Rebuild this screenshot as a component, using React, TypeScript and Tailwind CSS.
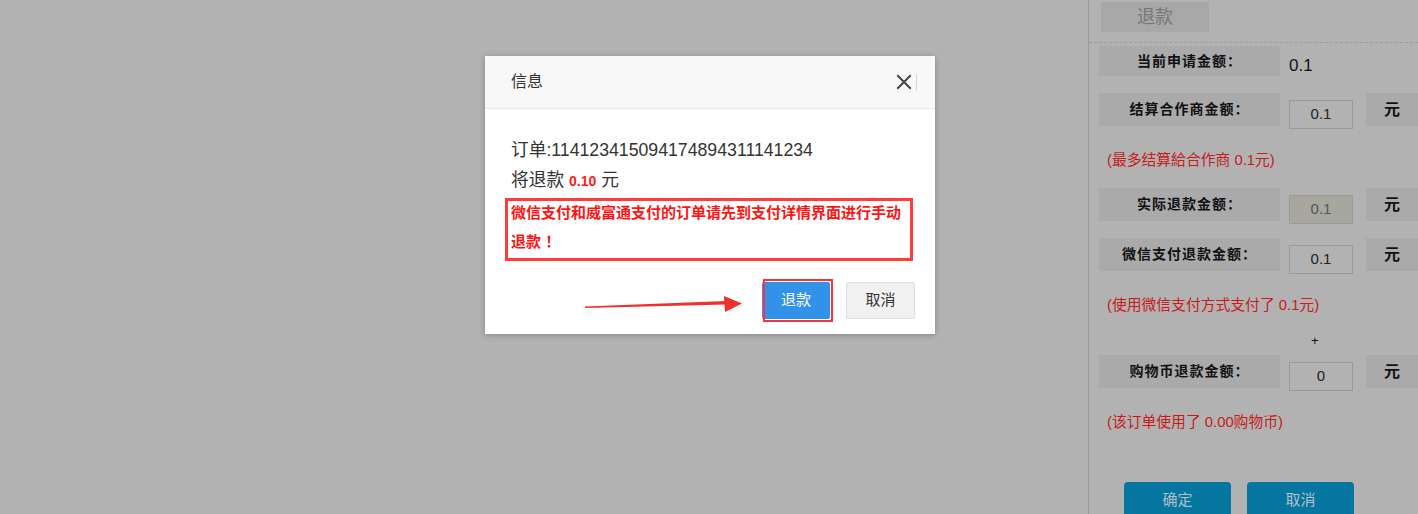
import React from "react";

const CJK = '"Liberation Sans", "Noto Sans CJK SC", sans-serif';

function Row({ label, children, top, h = "h-[33px]" }: { label: string; children?: React.ReactNode; top: string; h?: string }) {
  return (
    <div className={`flex items-start ${h} ${top}`}>
      <div className={`w-[181px] ${h} bg-[#aaaaaa] flex items-center justify-center text-[14px] font-bold text-[#111] tracking-[1px]`}>
        {label}
      </div>
      {children}
    </div>
  );
}

function Input({ value, disabled }: { value: string; disabled?: boolean }) {
  return (
    <div
      className={`ml-[9px] mt-[7px] w-[64px] h-[29px] shrink-0 border border-[#999] flex items-center justify-center text-[15px] ${
        disabled ? "bg-[#a7a7a0] text-[#555]" : "bg-[#b2b2b2] text-[#222]"
      }`}
    >
      {value}
    </div>
  );
}

function Yuan() {
  return (
    <div className="ml-[13px] w-[52px] h-[33px] shrink-0 bg-[#aaaaaa] flex items-center justify-center text-[16px] font-bold text-[#111]">
      元
    </div>
  );
}

export default function App() {
  return (
    <div className="relative w-[1418px] h-[514px] overflow-hidden flex bg-[#b2b2b2]" style={{ fontFamily: CJK }}>
      <div className="w-[1089px] h-full" />
      <div className="flex-1 h-full border-l border-[#9a9a9a] flex flex-col">
        <div className="pl-[12px] pt-[2px]">
          <div className="w-[108px] h-[30px] bg-[#a8a8a8] flex items-center justify-center text-[18px] text-[#777]">
            退款
          </div>
        </div>
        <div className="mt-[10px] border-t border-dashed border-[#9c9c9c]" />
        <div className="pl-[10px] flex flex-col">
          <Row label="当前申请金额：" top="mt-[3px]" h="h-[30px]">
            <div className="ml-[9px] mt-[7px] text-[17px] leading-[25px] text-[#111]">0.1</div>
          </Row>
          <Row label="结算合作商金额：" top="mt-[17px]">
            <Input value="0.1" />
            <Yuan />
          </Row>
          <div className="mt-[24px] ml-[8px] text-[14.8px] text-[#c81a1a] leading-[20px]">(最多结算給合作商 0.1元)</div>
          <Row label="实际退款金额：" top="mt-[18px]">
            <Input value="0.1" disabled />
            <Yuan />
          </Row>
          <Row label="微信支付退款金额：" top="mt-[17px]">
            <Input value="0.1" />
            <Yuan />
          </Row>
          <div className="mt-[24px] ml-[8px] text-[14.8px] text-[#c81a1a] leading-[20px]">(使用微信支付方式支付了 0.1元)</div>
          <div className="mt-[21px] ml-[212px] text-[13px] text-[#111] leading-[10px]">+</div>
          <Row label="购物币退款金额：" top="mt-[9px]">
            <Input value="0" />
            <Yuan />
          </Row>
          <div className="mt-[24px] ml-[8px] text-[14.8px] text-[#c81a1a] leading-[20px]">(该订单使用了 0.00购物币)</div>
          <div className="mt-[50px] ml-[25px] flex gap-[16px]">
            <div className="w-[107px] h-[36px] rounded-[4px] bg-[#0576a0] flex items-center justify-center text-[15px] text-[#b3c0c7]">
              确定
            </div>
            <div className="w-[107px] h-[36px] rounded-[4px] bg-[#0576a0] flex items-center justify-center text-[15px] text-[#b3c0c7]">
              取消
            </div>
          </div>
        </div>
      </div>

      {/* Dialog */}
      <div className="absolute left-[485px] top-[56px] w-[450px] h-[278px] bg-white shadow-[0_1px_6px_rgba(0,0,0,0.25)] flex flex-col">
        <div className="h-[53px] bg-[#f8f8f8] border-b border-[#e8e8e8] flex items-center pl-[26px] pr-[18px]">
          <span className="text-[16px] text-[#333]">信息</span>
          <div className="ml-auto flex items-center">
            <svg width="16" height="16" viewBox="0 0 16 16" className="mr-[4px]">
              <path d="M2 2 L14 14 M14 2 L2 14" stroke="#444" strokeWidth="2" strokeLinecap="square" />
            </svg>
            <div className="w-[1px] h-[17px] bg-[#bcdcf5]" />
          </div>
        </div>
        <div className="px-[26px] pt-[28px] text-[#333]">
          <div className="text-[17.7px] leading-[26px]">订单:114123415094174894311141234</div>
          <div className="text-[17.7px] leading-[30px] mt-[2px]">
            将退款 <span className="text-[14px] font-bold text-[#ff1a1a]">0.10</span> 元
          </div>
          <div className="-ml-[6px] -mr-[4px] mt-[2px] border-[3px] border-[#ff3b3b] pl-[3px] h-[63px] text-[15px] leading-[29px] font-bold text-[#ff1414]">
            <div className="-mt-[3px]">微信支付和威富通支付的订单请先到支付详情界面进行手动退款 ！</div>
          </div>
        </div>
        <div className="flex justify-end pr-[20px] mt-[21px] gap-[16px]">
          <div className="relative w-[68px] h-[37px] bg-[#3291e8] rounded-[2px] flex items-center justify-center text-[15px] text-white">
            退款
            <div className="absolute left-[1px] -top-[3px] w-[70px] h-[43px] border-[2px] border-[#ff3333]" />
          </div>
          <div className="w-[69px] h-[37px] bg-[#f1f1f1] border border-[#dedede] rounded-[2px] flex items-center justify-center text-[15px] text-[#333]">
            取消
          </div>
        </div>
      </div>

      {/* Arrow annotation */}
      <svg className="absolute left-0 top-0" width="1418" height="514" style={{ pointerEvents: "none" }}>
        <polygon points="585,306.5 726,301 726,304.5 585,308" fill="#f0302c" />
        <polygon points="724,296 742,303.5 725,312" fill="#f0302c" />
      </svg>
    </div>
  );
}
